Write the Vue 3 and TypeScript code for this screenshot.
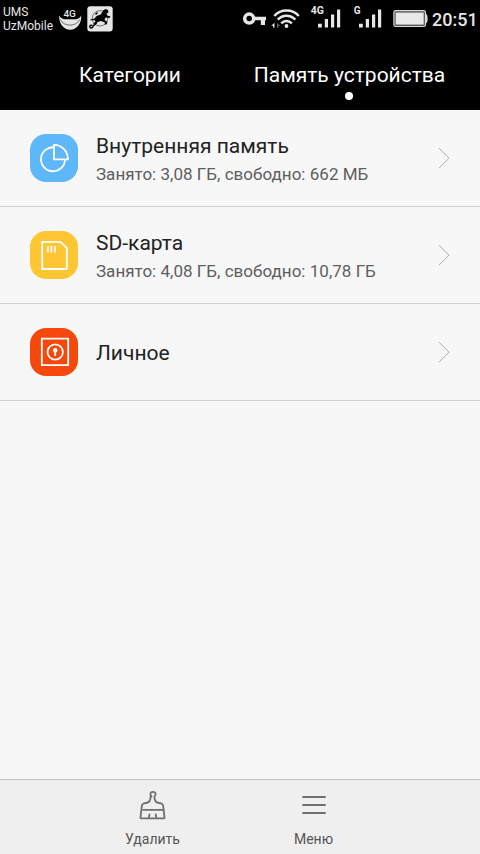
<script setup lang="ts">
interface StorageItem {
  title: string
  detail?: string
  icon: 'pie' | 'card' | 'safe'
}

const items: StorageItem[] = [
  { title: 'Внутренняя память', detail: 'Занято: 3,08 ГБ, свободно: 662 МБ', icon: 'pie' },
  { title: 'SD-карта', detail: 'Занято: 4,08 ГБ, свободно: 10,78 ГБ', icon: 'card' },
  { title: 'Личное', icon: 'safe' },
]
</script>

<template>
  <main class="screen">
    <header class="top">
      <div class="status">
        <div class="carriers"><span>UMS</span><span>UzMobile</span></div>
        <svg class="face" width="24" height="26" viewBox="58 6 24 26">
          <text x="63.4" y="16.8" font-size="9.5" font-weight="500" fill="#e6e6e6" textLength="12.5" lengthAdjust="spacingAndGlyphs">4G</text>
          <path d="M59.2 15.5c1 2 3 3.500 5 3.700h12c2-.2 4-1.700 5-3.700.6 7-3.800 14.200-11 14.200s-11.600-7.200-11-14.200z" fill="#e6e6e6" />
          <path d="M60.500 19.500c2.500 7.500 16.500 7.500 19 0" fill="none" stroke="#555" stroke-width=".8" />
        </svg>
        <svg class="app" width="26" height="26" viewBox="87 6 26 26">
          <rect x="87.3" y="6.2" width="25.4" height="25.4" rx="3" fill="#e6e6e6" />
          <circle cx="100" cy="18.3" r="7.700" fill="none" stroke="#444" stroke-width=".7" />
          <path d="M103 10.500l2.500-1.500 2.500 1 .5 2.500-2 1 .5 2 3.500 1-1 1.500-4-.5-1 2.500 3 2-1 2.500h-2l.5-2-4-1.500-3.500 1-2 3-2.500-1 2.500-2.500-1-1.500-4 .5v-1l4-1 2-2.500 4-1.500 1.500-2z" fill="#050505" />
          <path d="M97 21c-1 4-3 3-4 5.500-1 2.500-3.300 1.500-3.300 0s2-1.800 2.300-.5M97.500 12.500l-2 2" fill="none" stroke="#050505" stroke-width="1.400" />
        </svg>
        <svg class="key" width="24" height="16" viewBox="243 11 24 16">
          <circle cx="249.200" cy="18.600" r="4.500" fill="none" stroke="#e6e6e6" stroke-width="3.500" />
          <path d="M254 16.800h12v3.400h-1v4.700h-4.200v-4.700H254z" fill="#e6e6e6" />
        </svg>
        <svg class="wifi" width="29" height="22" viewBox="271 8 29 22">
          <g fill="none" stroke="#e6e6e6" stroke-width="2.500">
            <path d="M274.300 16c6.500-7.300 18-7.300 24.500 0M277.800 19.700c4.800-5.200 12.700-5.200 17.500 0M281.300 23.300c2.900-3.200 7.600-3.200 10.500 0" />
          </g>
          <circle cx="286.500" cy="26" r="1.900" fill="#e6e6e6" />
          <path d="M271.200 25.800l3.300-3v5h-1.300v-2z" fill="#e6e6e6" />
          <path d="M277 23l3.300 2.700-2 .3v1.800H277z" fill="#666" />
        </svg>
        <svg class="signal" width="31" height="24" viewBox="310 5 31 24">
          <text x="310.700" y="14" font-size="10" font-weight="700" fill="#e6e6e6" textLength="13.200" lengthAdjust="spacingAndGlyphs">4G</text>
          <path d="M318 23.800h3.800v3.700H318zM324.800 19h3.200v8.500h-3.200zM331 14.500h3.200v13H331zM337 9.500h3.200v18H337z" fill="#e6e6e6" />
        </svg>
        <svg class="signal second" width="31" height="24" viewBox="352 5 31 24">
          <text x="353.800" y="14" font-size="10" font-weight="700" fill="#e6e6e6">G</text>
          <path d="M359 23.800h3.800v3.700H359zM365.800 19h3.200v8.500h-3.200zM372 14.500h3.200v13H372zM378 9.500h3.200v18H378z" fill="#e6e6e6" />
        </svg>
        <svg class="battery" width="35" height="18" viewBox="393 10 35 18">
          <rect x="393.900" y="10.700" width="31.600" height="15.800" rx="1.800" fill="#555" stroke="#d8d8d8" stroke-width="1.200" />
          <rect x="395.700" y="12.600" width="28" height="12" fill="#e9e9e9" />
          <path d="M426 14.500c1.500 0 1.500 8.300 0 8.300z" fill="#ddd" stroke="#ddd" />
        </svg>
        <time class="time">20:51</time>
      </div>
      <nav class="tabs">
        <a class="tab">Категории</a>
        <a class="tab active">Память устройства</a>
      </nav>
    </header>

    <ul class="list">
      <li v-for="item in items" :key="item.title" class="row">
        <span class="tile" :class="item.icon">
          <svg v-if="item.icon === 'pie'" width="48" height="48" viewBox="0 0 48 48">
            <path d="M24 13.300a12 12 0 1 0 11 12.100M24 10.800v14.600h13.900c0-8.400-5.700-14.300-13.900-14.600z" />
          </svg>
          <svg v-else-if="item.icon === 'card'" width="48" height="48" viewBox="0 0 48 48">
            <path d="M12.200 10.900h18.300l6.300 6.300v20.800H12.200zM17.800 15v6.500M21.400 15v6.500M25 15v6.500" />
          </svg>
          <svg v-else width="48" height="48" viewBox="0 0 48 48">
            <path d="M11.800 10.700h26.400v26.500H11.800z" />
            <circle cx="25.200" cy="24" r="7.700" />
            <circle cx="25.200" cy="22.200" r="2.200" class="solid" />
            <path d="M25.200 22v6" />
          </svg>
        </span>
        <span class="copy">
          <span class="title">{{ item.title }}</span>
          <span v-if="item.detail" class="detail">{{ item.detail }}</span>
        </span>
        <svg class="chevron" width="14" height="22" viewBox="0 0 14 22">
          <path d="M2 1.200L12 11.200 2 21.200" />
        </svg>
      </li>
    </ul>

    <footer class="bar">
      <button class="action">
        <svg width="28" height="32" viewBox="138 789 28 32">
          <path d="M150.500 796.500c-2-2.200-1.200-4.700 1.500-4.700s3.500 2.500 1.500 4.700c-.3 4 1 6 4.500 6.500 3.300.4 4.300 1.200 4.300 4.200l1.200 10c.1.800-.2 1.200-1 1.200h-22c-.8 0-1.100-.4-1-1.200l1.200-10c0-3 1-3.800 4.300-4.200 3.500-.5 4.800-2.500 4.500-6.500z" />
          <path d="M142 809.800h20.500M148.500 814.500l-.7 3.500M154.800 814.500l.5 3.500" />
        </svg>
        <span>Удалить</span>
      </button>
      <button class="action">
        <svg width="28" height="32" viewBox="299 789 28 32">
          <path d="M302 797h22M302 805h22M302 813h22" />
        </svg>
        <span>Меню</span>
      </button>
    </footer>
  </main>
</template>

<style>
body { background: #f7f7f7; }
</style>

<style scoped>
.screen {
  display: flex;
  flex-direction: column;
  width: 480px;
  height: 854px;
  overflow: hidden;
  background: #f7f7f7;
  font-family: Roboto, sans-serif;
}
.screen svg { display: block; flex: none; }
.top { height: 110px; background: #000; color: #fff; }
.status { display: flex; align-items: flex-start; height: 38px; color: #e6e6e6; }
.carriers {
  display: flex;
  flex-direction: column;
  width: 55px;
  padding: 5px 0 0 3px;
  box-sizing: border-box;
  font-size: 12px;
  line-height: 14px;
  white-space: nowrap;
}
.face { margin: 6px 0 0 3px; }
.app { margin: 6px 0 0 5px; }
.key { margin: 11px 0 0 130px; }
.wifi { margin: 8px 0 0 4px; }
.signal { margin: 5px 0 0 10px; }
.second { margin-left: 11px; }
.battery { margin: 10px 0 0 10px; }
.time { margin: 8px 0 0 4px; font-size: 18px; font-weight: 500; line-height: 24px; }
.tabs { display: flex; height: 72px; padding-left: 20px; }
.tab {
  display: flex;
  flex-direction: column;
  align-items: center;
  width: 220px;
  padding-top: 24px;
  font-size: 21px;
  line-height: 26px;
  white-space: nowrap;
}
.active { width: 219px; }
.active::after { content: ''; width: 8px; height: 8px; margin: 4px 1px 0 0; border-radius: 50%; background: #fff; }
.list { flex: 1; margin: 0; padding: 0; list-style: none; }
.row {
  display: flex;
  align-items: center;
  height: 96px;
  padding: 0 29px 0 30px;
  border-bottom: 1px solid #d0d0d0;
}
.tile { width: 48px; height: 48px; border-radius: 16px; }
.pie { background: #5db7f9; }
.card { background: #ffc634; }
.safe { background: #f4480d; }
.tile svg { fill: none; stroke: #fff; stroke-width: 1.8; stroke-linejoin: round; }
.tile .solid { fill: #fff; stroke: none; }
.copy { display: flex; flex: 1; flex-direction: column; margin-left: 18px; padding-top: 3px; white-space: nowrap; }
.title { color: #222; font-size: 21px; line-height: 28px; }
.title:only-child { margin-bottom: 2px; }
.detail { color: #5e5e5e; font-size: 17px; line-height: 28px; letter-spacing: 0.02px; }
.chevron { fill: none; stroke: #aaa; stroke-width: 1; }
.bar {
  display: flex;
  height: 74px;
  padding: 0 86px 0 72px;
  border-top: 1px solid #bfbfbf;
  background: #efefef;
}
.action {
  display: flex;
  flex: 1;
  flex-direction: column;
  align-items: center;
  padding: 9px 0 0;
  border: 0;
  background: none;
  color: #555;
  font: 14px/20px Roboto, sans-serif;
}
.action svg { fill: none; stroke: #707070; stroke-width: 1.800; stroke-linecap: round; stroke-linejoin: round; }
.action span { margin-top: 8px; }
</style>
